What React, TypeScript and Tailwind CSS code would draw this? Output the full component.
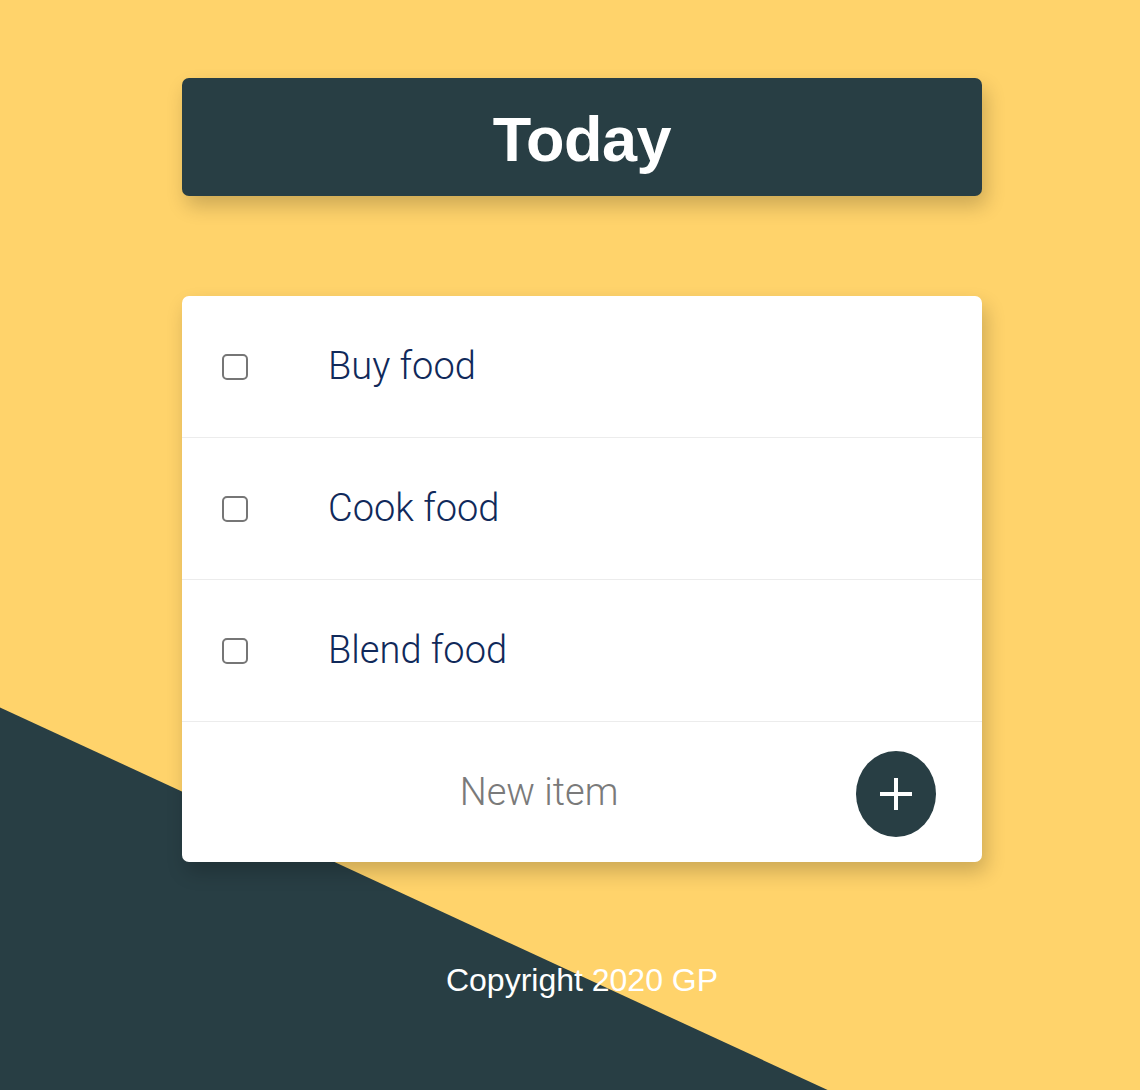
import { useState } from "react"

const initialItems = ["Buy food", "Cook food", "Blend food"]

export default function App() {
  const [items] = useState(initialItems)

  return (
    <div className="relative min-h-[1090px] w-full overflow-hidden bg-[#ffd36b] font-['Liberation_Sans',Arial,sans-serif]">
      <div className="absolute inset-0 bg-[#283e44] [clip-path:polygon(0_64.9%,72.6%_100%,0_100%)]" />

      <div className="relative flex flex-col items-center pl-6 pt-[78px]">
        <header className="flex h-[118px] w-[800px] items-center justify-center rounded-[7px] bg-[#283e44] shadow-[4px_10px_20px_rgba(0,0,0,0.2)]">
          <h1 className="mt-1 text-[63px] font-bold leading-none tracking-[-0.5px] text-white">Today</h1>
        </header>

        <div className="mt-[100px] w-[800px] rounded-[7px] bg-white shadow-[4px_10px_20px_rgba(0,0,0,0.2)]">
          {items.map((item) => (
            <div key={item} className="flex h-[142px] items-center border-b border-[#ececec] px-10">
              <input
                type="checkbox"
                className="h-[26px] w-[26px] shrink-0 appearance-none rounded-[5px] border-2 border-[#767676] bg-white"
              />
              <p className="ml-20 font-['Roboto',sans-serif] text-[38px] font-light text-[#10295a]">{item}</p>
            </div>
          ))}
          <form className="flex h-[140px] items-center pl-10 pr-[46px]" onSubmit={(e) => e.preventDefault()}>
            <input
              type="text"
              placeholder="New item"
              className="min-w-0 flex-1 bg-transparent text-center font-['Roboto',sans-serif] text-[38px] font-light text-[#10295a] outline-none placeholder:text-[#7a7a7a]"
            />
            <button type="submit" className="mt-[3px] flex h-[86px] w-[80px] items-center justify-center rounded-[50%] bg-[#283e44]">
              <svg width="32" height="32" viewBox="0 0 32 32">
                <path d="M16 0v32M0 16h32" stroke="white" strokeWidth="4" />
              </svg>
            </button>
          </form>
        </div>

        <footer className="mt-[100px] text-[32px] leading-[37px] text-white">Copyright 2020 GP</footer>
      </div>
    </div>
  )
}
